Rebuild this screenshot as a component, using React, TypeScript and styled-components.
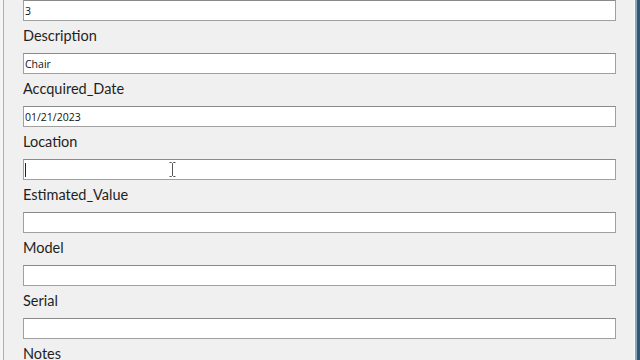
import React from "react";
import styled, { createGlobalStyle } from "styled-components";

const GlobalStyle = createGlobalStyle`
  html, body {
    margin: 0;
    padding: 0;
    background: #f0f0f0;
    overflow: hidden;
  }
`;

const Window = styled.div`
  display: flex;
  width: 640px;
  height: 360px;
  overflow: hidden;
  background: #f0f0f0;
  font-family: "Open Sans", "Noto Sans", "Liberation Sans", sans-serif;
`;

const LeftEdge = styled.div`
  width: 3px;
  flex-shrink: 0;
  background: #f4f4f4;
  border-right: 1px solid #a9b0b7;
`;

const RightEdge = styled.div`
  width: 5px;
  flex-shrink: 0;
  border-left: 1px solid #fafafa;
  background: linear-gradient(to right, #8fa6ba 0, #8fa6ba 2px, #2f5877 2px);
`;

const Form = styled.div`
  flex: 1;
  display: flex;
  flex-direction: column;
  padding: 0 18px 0 19px;
`;

const Label = styled.div`
  flex-shrink: 0;
  height: 32px;
  display: flex;
  align-items: center;
  padding-bottom: 3px;
  box-sizing: border-box;
  font-family: Lato, "Open Sans", sans-serif;
  font-size: 14.5px;
  color: #1f1f1f;
`;

const FieldBox = styled.div<{ $focused?: boolean }>`
  flex-shrink: 0;
  position: relative;
  height: 21px;
  box-sizing: border-box;
  background: #ffffff;
  border: 1px solid #a0a0a0;
  border-top-color: #8a8a8a;
  display: flex;
  align-items: center;
  padding-left: 1px;
  font-size: 10.5px;
  color: #111;
`;

const Caret = styled.span`
  width: 1px;
  height: 14px;
  background: #222;
`;

const Pointer = styled.svg`
  position: absolute;
  left: 145px;
  top: 2px;
`;

interface Field {
  label?: string;
  value?: string;
  focused?: boolean;
  noBox?: boolean;
}

const fields: Field[] = [
  { value: "3" },
  { label: "Description", value: "Chair" },
  { label: "Accquired_Date", value: "01/21/2023" },
  { label: "Location", focused: true },
  { label: "Estimated_Value" },
  { label: "Model" },
  { label: "Serial" },
  { label: "Notes", noBox: true },
];

export default function App() {
  return (
    <>
      <GlobalStyle />
      <Window>
        <LeftEdge />
        <Form>
          {fields.map((f, i) => (
            <React.Fragment key={i}>
              {f.label && <Label>{f.label}</Label>}
              {!f.noBox && (
                <FieldBox $focused={f.focused}>
                  {f.focused && <Caret />}
                  {f.value}
                  {f.focused && (
                    <Pointer width="7" height="15" viewBox="0 0 7 15">
                      <path
                        d="M0.5 0.5h2l1 1 1-1h2M3.5 1.5v12M0.5 14.5h2l1-1 1 1h2"
                        fill="none"
                        stroke="#555"
                        strokeWidth="1"
                      />
                    </Pointer>
                  )}
                </FieldBox>
              )}
            </React.Fragment>
          ))}
        </Form>
        <RightEdge />
      </Window>
    </>
  );
}
